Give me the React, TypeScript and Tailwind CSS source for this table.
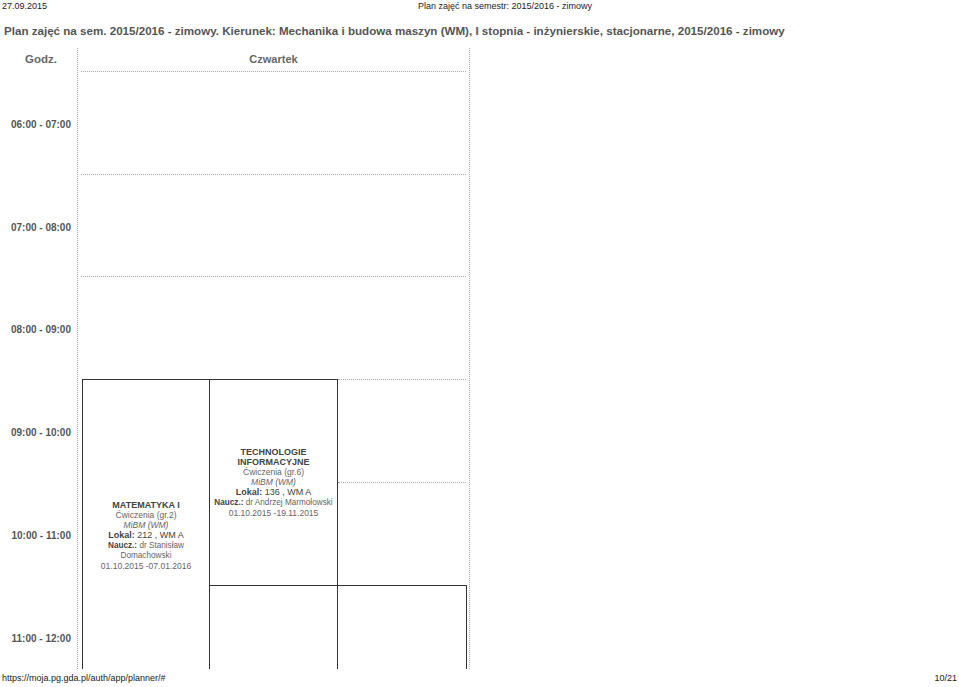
const hours = [
  { label: "06:00 - 07:00", h: "h-[103px]" },
  { label: "07:00 - 08:00", h: "h-[102px]" },
  { label: "08:00 - 09:00", h: "h-[103px]" },
  { label: "09:00 - 10:00", h: "h-[103px]" },
  { label: "10:00 - 11:00", h: "h-[103px]" },
  { label: "11:00 - 12:00", h: "h-[103px]" },
];

interface LessonProps {
  title: string[];
  kind: string;
  place: string;
  teacher: string;
  dates: string;
}

function Lesson({ title, kind, place, teacher, dates }: LessonProps) {
  return (
    <div className="flex flex-col items-center text-center px-[1px] text-[#666]">
      {title.map((t) => (
        <div key={t} className="font-bold text-[9px] leading-[10px] text-[#444]">
          {t}
        </div>
      ))}
      <div className="text-[8.5px] leading-[10px]">{kind}</div>
      <div className="text-[8.5px] leading-[10px] italic">MiBM (WM)</div>
      <div className="text-[9px] leading-[11px] text-[#444]">
        <span className="font-bold">Lokal:</span> {place}
      </div>
      <div className="text-[8.2px] leading-[10px]">
        <span className="font-bold text-[#444]">Naucz.:</span> {teacher}
      </div>
      <div className="text-[8.5px] leading-[10px]">{dates}</div>
    </div>
  );
}

export default function App() {
  return (
    <div className="w-[959px] h-[687px] overflow-hidden bg-white font-['Liberation_Sans',Arial,sans-serif] text-[#222]">
      <div className="flex h-[12px] text-[9px] leading-[12px] pl-[2px]">
        <div className="w-[416px]">27.09.2015</div>
        <div>Plan zajęć na semestr: 2015/2016 - zimowy</div>
      </div>

      <h1 className="mt-[12px] pl-[4px] h-[24px] text-[11.6px] leading-[14px] font-bold text-[#555]">
        Plan zajęć na sem. 2015/2016 - zimowy. Kierunek: Mechanika i budowa maszyn (WM), I stopnia - inżynierskie, stacjonarne, 2015/2016 - zimowy
      </h1>

      <div className="flex h-[621px] overflow-hidden">
        <div className="w-[77px] flex flex-col">
          <div className="h-[24px] shrink-0 flex items-center pl-[25px] text-[11.5px] font-bold text-[#666]">
            Godz.
          </div>
          {hours.map((hr) => (
            <div
              key={hr.label}
              className={`${hr.h} shrink-0 pt-[47px] pr-[6px] text-right text-[10px] leading-[12px] font-bold text-[#555]`}
            >
              {hr.label}
            </div>
          ))}
        </div>

        <div className="w-[393px] border-x border-dotted border-[#aaa] flex flex-col">
          <div className="h-[24px] shrink-0 mx-[3px] border-b border-dotted border-[#aaa] flex items-center justify-center text-[11px] font-bold text-[#666]">
            Czwartek
          </div>
          <div className="h-[103px] shrink-0 mx-[3px] border-b border-dotted border-[#aaa]" />
          <div className="h-[102px] shrink-0 mx-[3px] border-b border-dotted border-[#aaa]" />
          <div className="h-[102px] shrink-0" />

          <div className="grid grid-cols-[128px_128px_1fr] ml-[4px] mr-[2px]">
            <div className="h-[312px] border border-[#333] flex items-center justify-center">
              <Lesson
                title={["MATEMATYKA I"]}
                kind="Ćwiczenia (gr.2)"
                place="212 , WM A"
                teacher="dr Stanisław Domachowski"
                dates="01.10.2015 -07.01.2016"
              />
            </div>

            <div className="flex flex-col">
              <div className="h-[207px] border-y border-r border-[#333] flex items-center justify-center">
                <Lesson
                  title={["TECHNOLOGIE", "INFORMACYJNE"]}
                  kind="Ćwiczenia (gr.6)"
                  place="136 , WM A"
                  teacher="dr Andrzej Marmołowski"
                  dates="01.10.2015 -19.11.2015"
                />
              </div>
              <div className="h-[120px] border-r border-[#333]" />
            </div>

            <div className="flex flex-col">
              <div className="h-[104px] border-y border-dotted border-[#aaa] mr-[1px]" />
              <div className="h-[102px]" />
              <div className="h-[120px] border-t border-r border-[#333]" />
            </div>
          </div>
        </div>
      </div>

      <div className="flex justify-between items-center h-[18px] px-[2px] text-[9px] leading-[12px]">
        <span>https://moja.pg.gda.pl/auth/app/planner/#</span>
        <span>10/21</span>
      </div>
    </div>
  );
}
